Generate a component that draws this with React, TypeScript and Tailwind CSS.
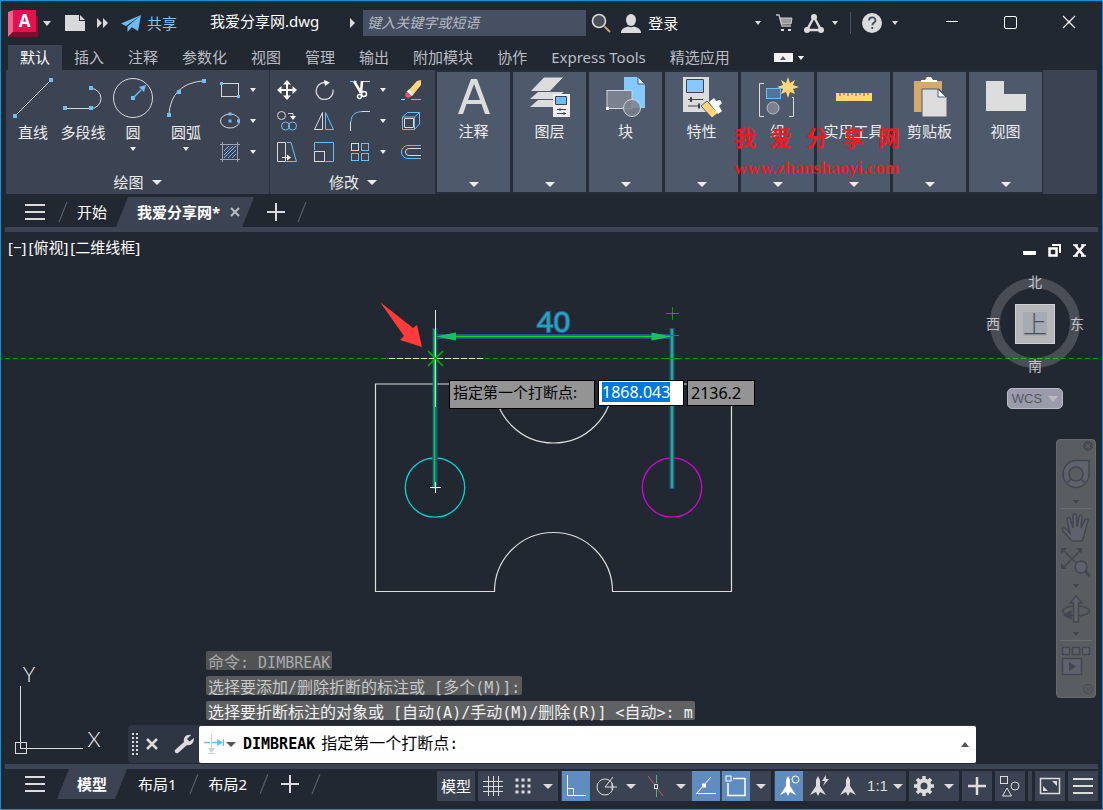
import type { ReactNode } from 'react';

interface IconProps {
  className?: string;
}

const ribbonTabs = [
  '默认',
  '插入',
  '注释',
  '参数化',
  '视图',
  '管理',
  '输出',
  '附加模块',
  '协作',
  'Express Tools',
  '精选应用',
];

function Caret({ className = 'w-2 h-1' }: IconProps) {
  return (
    <svg viewBox="0 0 8 4" className={className} preserveAspectRatio="none">
      <path d="M0 0h8L4 4z" fill="currentColor" />
    </svg>
  );
}

// Small light-blue grip square used all over the draw icons
function Grip({ x, y }: { x: number; y: number }) {
  return <rect x={x - 2} y={y - 2} width="4" height="4" fill="#6dbdf8" />;
}

/* ---------- Title bar ---------- */

function TitleBar() {
  return (
    <header className="flex h-11 items-center text-[#dcdcdc]">
      <button aria-label="应用程序菜单" className="ml-[3px] flex items-center gap-[5px]">
        <svg viewBox="0 0 30 27" className="h-[27px] w-[30px]">
          <path d="M0 2l6-2v21l-6 6z" fill="#f0668c" />
          <path d="M27 5l3 1v21H3l3-5h21z" fill="#8b0c32" />
          <path d="M0 27l6-6h21l2 6z" fill="#7c0f2e" />
          <rect x="5" y="0" width="23" height="22" fill="#e51050" />
          <text x="16.5" y="17" textAnchor="middle" fontSize="17" fontWeight="700" fontFamily="Open Sans, sans-serif" fill="#fff">
            A
          </text>
        </svg>
        <Caret className="h-[5px] w-2" />
      </button>
      <button aria-label="新建" className="ml-[14px]">
        <svg viewBox="0 0 20 16" className="h-4 w-5">
          <path d="M0 0h14v6h6v10H0z" fill="#d9d9d9" />
          <path d="M15 0l5 5h-5z" fill="#d9d9d9" />
        </svg>
      </button>
      <button aria-label="更多" className="ml-3">
        <svg viewBox="0 0 12 10" className="h-[10px] w-3">
          <path d="M0 0l5 5-5 5zM6 0l5 5-5 5z" fill="#d9d9d9" />
        </svg>
      </button>
      <button className="ml-3 flex items-center gap-[6px] text-[15px] leading-5 text-[#7cc4fa]">
        <svg viewBox="0 0 20 17" className="h-[17px] w-5">
          <path d="M20 0L0 8.500l5 2.500zM20 0L6.500 11.500V17l3.500-4zM20 0l-9.500 12 6.500 4z" fill="#6dbdf8" />
        </svg>
        共享
      </button>
      <h1 className="ml-[33px] pb-1 text-[15px] leading-5 text-white">我爱分享网.dwg</h1>
      <svg viewBox="0 0 5 10" className="ml-[31px] h-[10px] w-[5px]">
        <path d="M0 0l5 5-5 5z" fill="#dcdcdc" />
      </svg>
      <input
        aria-label="搜索"
        placeholder="键入关键字或短语"
        className="ml-2 h-[26px] w-[223px] bg-[#475062] px-1 pb-[2px] text-sm italic placeholder:text-[#b4bac4] focus:outline-none"
      />
      <button aria-label="查找" className="ml-[5px]">
        <svg viewBox="0 0 20 20" className="h-5 w-5" fill="none">
          <circle cx="8" cy="8" r="6.500" fill="#4a4f58" stroke="#d9d9d9" strokeWidth="1.600" />
          <path d="M13.500 13.500L19 19" stroke="#c9a26c" strokeWidth="2" />
        </svg>
      </button>
      <button className="ml-[10px] flex items-center gap-[7px] text-[15px] leading-5 text-white">
        <svg viewBox="0 0 20 19" className="h-[19px] w-5" fill="#dcdcdc">
          <ellipse cx="10" cy="6" rx="5" ry="6" />
          <path d="M0 19c0-4 3-5.500 7-6.500 2 1 4 1 6 0 4 1 7 2.500 7 6.500z" />
        </svg>
        登录
      </button>

      <div className="ml-auto flex items-center">
        <Caret className="h-1 w-[6px]" />
        <button aria-label="购物车" className="ml-[15px]">
          <svg viewBox="0 0 17 18" className="h-[18px] w-[17px]" fill="none">
            <path d="M0 1h3l3 11h9" stroke="#bdbdbd" strokeWidth="1.300" />
            <path d="M4 4h12l-1 6H5.500z" fill="#9a9a9a" stroke="#cfcfcf" />
            <path d="M5 15h3v2H5zM12 15h3v2h-3z" fill="#dcdcdc" />
          </svg>
        </button>
        <button aria-label="Autodesk App Store" className="ml-[11px] flex items-center gap-2">
          <svg viewBox="0 0 20 19" className="h-[19px] w-5" fill="none">
            <path d="M10 3L3 16h14z" stroke="#dcdcdc" strokeWidth="2.400" />
            <circle cx="10" cy="3" r="3" fill="#dcdcdc" />
            <circle cx="3" cy="16" r="3" fill="#dcdcdc" />
            <circle cx="17" cy="16" r="3" fill="#dcdcdc" />
          </svg>
          <Caret className="h-1 w-[6px]" />
        </button>
        <span className="ml-3 h-[22px] w-px bg-[#4a5365]" />
        <button aria-label="帮助" className="ml-[11px] flex items-center gap-[10px]">
          <svg viewBox="0 0 20 20" className="h-5 w-5">
            <circle cx="10" cy="10" r="10" fill="#dcdcdc" />
            <path d="M7 7.500c0-4 6.500-4 6.500-.3 0 2.600-3.200 2.600-3.200 5M10.300 14v2" fill="none" stroke="#444a54" strokeWidth="1.800" />
          </svg>
          <Caret className="h-1 w-[6px]" />
        </button>
        <button aria-label="最小化" className="ml-12 flex h-6 w-4 items-center pb-1">
          <span className="h-px w-3 bg-white" />
        </button>
        <button aria-label="最大化" className="mb-[2px] ml-[42px] h-[13px] w-[13px] rounded-[2px] border border-white" />
        <button aria-label="关闭" className="mr-[22px] mb-[2px] ml-[45px]">
          <svg viewBox="0 0 14 14" className="h-[14px] w-[14px]">
            <path d="M1 1l12 12M13 1L1 13" stroke="#fff" strokeWidth="1.200" />
          </svg>
        </button>
      </div>
    </header>
  );
}

function RibbonTabs() {
  return (
    <nav className="ml-[3px] flex h-[25px] items-center text-[15px] leading-[25px] whitespace-nowrap text-[#b9bdc4]">
      {ribbonTabs.map((tab, index) => (
        <button key={tab} className={index === 0 ? 'bg-[#3c4453] px-3 text-white' : 'px-3'}>
          {tab}
        </button>
      ))}
      <button aria-label="最小化功能区" className="ml-8 flex items-center gap-[5px] text-white">
        <span className="flex h-[9px] w-[19px] items-center justify-center bg-[#f2f2f2] text-[#555]">
          <Caret className="h-1 w-[6px] rotate-180" />
        </span>
        <Caret className="h-1 w-[6px]" />
      </button>
    </nav>
  );
}

/* ---------- Ribbon ---------- */

function LineIcon() {
  return (
    <svg viewBox="0 0 40 40" className="h-10 w-10">
      <path d="M2 38L38 2" stroke="#d9d9d9" />
      <Grip x={2} y={38} />
      <Grip x={38} y={2} />
    </svg>
  );
}

function PolylineIcon() {
  return (
    <svg viewBox="0 0 40 40" className="h-10 w-10" fill="none">
      <path d="M2 30.500h26a10 10 0 0 0 0-20" stroke="#d9d9d9" />
      <Grip x={2} y={30} />
      <Grip x={28} y={30} />
      <Grip x={28} y={10} />
    </svg>
  );
}

function CircleIcon() {
  return (
    <svg viewBox="0 0 40 40" className="h-10 w-10" fill="none">
      <circle cx="20" cy="20" r="19.500" stroke="#d9d9d9" />
      <path d="M20 20l8-8" stroke="#6dbdf8" strokeWidth="1.500" />
      <path d="M33 7l-2 7-5-5z" fill="#6dbdf8" />
      <Grip x={20} y={20} />
    </svg>
  );
}

function ArcIcon() {
  return (
    <svg viewBox="0 0 40 40" className="h-10 w-10" fill="none">
      <path d="M3 37C4 16 17 4 38 3" stroke="#d9d9d9" />
      <Grip x={3} y={37} />
      <Grip x={13} y={14} />
      <Grip x={38} y={3} />
    </svg>
  );
}

const drawTools = [
  { label: '直线', icon: <LineIcon />, menu: false },
  { label: '多段线', icon: <PolylineIcon />, menu: false },
  { label: '圆', icon: <CircleIcon />, menu: true },
  { label: '圆弧', icon: <ArcIcon />, menu: true },
];

const shapeTools = [
  {
    label: '矩形',
    icon: (
      <svg viewBox="0 0 20 20" className="h-5 w-5" fill="none">
        <rect x="1.500" y="3.500" width="17" height="13" stroke="#d9d9d9" />
        <rect x="0" y="2" width="3" height="3" fill="#6dbdf8" />
        <rect x="17" y="15" width="3" height="3" fill="#6dbdf8" />
      </svg>
    ),
  },
  {
    label: '椭圆',
    icon: (
      <svg viewBox="0 0 20 20" className="h-5 w-5" fill="none">
        <ellipse cx="10" cy="10" rx="9.500" ry="7" stroke="#d9d9d9" />
        <rect x="8.500" y="1.500" width="3" height="3" fill="#6dbdf8" />
        <rect x="8.500" y="8.500" width="3" height="3" fill="#6dbdf8" />
        <rect x="17" y="8.500" width="3" height="3" fill="#6dbdf8" />
      </svg>
    ),
  },
  {
    label: '图案填充',
    icon: (
      <svg viewBox="0 0 20 20" className="h-5 w-5" fill="none">
        <path d="M4 9l5-5M4 13l9-9M4 16L16 4M8 16l8-8M12 16l4-4" stroke="#6dbdf8" />
        <path d="M2.500 0v20M17.500 0v20M0 2.500h20M0 17.500h20" stroke="#9da3ad" />
      </svg>
    ),
  },
];

function DrawPanel() {
  return (
    <section className="flex w-[263px] flex-col">
      <div className="flex flex-1 pl-[2px]">
        {drawTools.map((tool) => (
          <button
            key={tool.label}
            className={
              tool.label === '圆弧'
                ? 'flex w-14 flex-col items-center pt-2'
                : 'flex w-[50px] flex-col items-center pt-2'
            }
          >
            {tool.icon}
            <span className="mt-1 text-[15px] leading-5 whitespace-nowrap">{tool.label}</span>
            {tool.menu && <Caret className="mt-[5px] h-1 w-[6px]" />}
          </button>
        ))}
        <div className="pt-1">
          {shapeTools.map((tool) => (
            <button key={tool.label} aria-label={tool.label} className="flex h-[31px] items-center">
              <span className="flex w-8 justify-center">{tool.icon}</span>
              <span className="flex w-[14px] justify-center">
                <Caret className="h-1 w-[6px]" />
              </span>
            </button>
          ))}
        </div>
      </div>
      <button className="mb-px flex h-[22px] items-center justify-center gap-2 text-[15px] leading-5">
        绘图
        <Caret className="h-[5px] w-[10px]" />
      </button>
    </section>
  );
}

function ModifyTool({ label, children }: { label: string; children: ReactNode }) {
  return (
    <button aria-label={label} className="flex h-[31px] items-center justify-center">
      <svg viewBox="0 0 20 20" className="h-5 w-5" fill="none" stroke="#d9d9d9">
        {children}
      </svg>
    </button>
  );
}

function ToolMenu() {
  return (
    <button aria-label="展开" className="flex h-[31px] items-center justify-center">
      <Caret className="h-1 w-[6px]" />
    </button>
  );
}

function ModifyPanel() {
  return (
    <section className="flex w-[164px] flex-col">
      <div className="grid flex-1 grid-cols-[32px_42px_30px_16px_40px] content-start pt-1">
        <ModifyTool label="移动">
          <path d="M10 3v14M3 10h14" strokeWidth="2" stroke="#fff" />
          <path d="M10 0l4 4.500H6zM10 20l4-4.500H6zM0 10l4.500-4v8zM20 10l-4.500-4v8z" fill="#fff" stroke="none" />
        </ModifyTool>
        <ModifyTool label="旋转">
          <path d="M11 2.500a8.500 8.500 0 1 0 8 7" strokeWidth="1.300" />
          <path d="M10 0l6 2.500-5 3.500z" fill="#fff" stroke="none" />
        </ModifyTool>
        <ModifyTool label="修剪">
          <path d="M0 1.500h8" stroke="#6dbdf8" strokeDasharray="3 1" />
          <path d="M12 1.500h8" />
          <path d="M4 1l7 12M12 1l-1 12" strokeWidth="2.500" stroke="#fff" />
          <circle cx="9.500" cy="16.500" r="2" strokeWidth="1.500" stroke="#fff" />
          <circle cx="14" cy="14" r="2.500" strokeWidth="1.500" stroke="#fff" />
        </ModifyTool>
        <ToolMenu />
        <ModifyTool label="删除">
          <path d="M16 1l4-1v5L11 16l-5-4z" fill="#ffd57a" stroke="none" />
          <path d="M8 9.500l4.500 4.500-2 2-5-4.500z" fill="#f1f1f1" stroke="none" />
          <path d="M6 12l4.500 4c-1.500 2-4 2.500-5.500 1s-1-3.500 1-5z" fill="#f0506a" stroke="none" />
          <path d="M0 19.500h4" />
          <path d="M10 19.500h10" stroke="#6dbdf8" />
        </ModifyTool>

        <ModifyTool label="复制">
          <circle cx="4.500" cy="4.500" r="4" />
          <circle cx="8.500" cy="15" r="4" stroke="#6dbdf8" />
          <circle cx="15.500" cy="15" r="4" stroke="#6dbdf8" />
          <path d="M11 2.500h5V6" />
          <path d="M13 5h6l-3 4z" fill="#fff" stroke="none" />
        </ModifyTool>
        <ModifyTool label="镜像">
          <path d="M8.500 1.500v17h-8z" />
          <path d="M11.500 1.500v17h8z" stroke="#6dbdf8" />
        </ModifyTool>
        <ModifyTool label="圆角">
          <path d="M1 11C1 4 5 1 12 .5" stroke="#6dbdf8" />
          <path d="M12 .5h8M.5 11v9" />
        </ModifyTool>
        <ToolMenu />
        <ModifyTool label="分解">
          <path d="M3.500 7.500h9v9h-9z" />
          <path d="M1.500 6l5-4.500h12V13l-5 5.500h-12zM1.500 6h12l5-4.500M13.500 6v12" stroke="#6dbdf8" />
        </ModifyTool>

        <ModifyTool label="拉伸">
          <path d="M.5.500h8v19h-8z" />
          <path d="M10 .5h4l5.500 19H9" stroke="#6dbdf8" />
          <path d="M5 15.500h6" stroke="#fff" />
          <path d="M10 12.500l4 3-4 3z" fill="#fff" stroke="none" />
        </ModifyTool>
        <ModifyTool label="缩放">
          <path d="M.5 8V.5h19v19h-8" stroke="#6dbdf8" />
          <rect x=".5" y="9.500" width="10" height="10" />
        </ModifyTool>
        <ModifyTool label="阵列">
          <rect x="1.500" y="1.500" width="7" height="7" />
          <rect x="11.500" y="1.500" width="7" height="7" stroke="#6dbdf8" />
          <rect x="1.500" y="11.500" width="7" height="7" stroke="#6dbdf8" />
          <rect x="11.500" y="11.500" width="7" height="7" stroke="#6dbdf8" />
        </ModifyTool>
        <ToolMenu />
        <ModifyTool label="偏移">
          <path d="M20 3.500H7a6.500 6.500 0 0 0 0 13h13" stroke="#6dbdf8" />
          <path d="M20 6.500H8a3.500 3.500 0 0 0 0 7h12" />
        </ModifyTool>
      </div>
      <button className="mb-px flex h-[22px] items-center justify-center gap-2 text-[15px] leading-5">
        修改
        <Caret className="h-[5px] w-[10px]" />
      </button>
    </section>
  );
}

const collapsedPanels = [
  {
    label: '注释',
    icon: (
      <path d="M4 37L17 2h6l13 35h-5l-3.500-10h-15L9 37zM14 23h12L20 7z" fill="#dcdcdc" />
    ),
  },
  {
    label: '图层',
    icon: (
      <>
        <path d="M0 30l8-7h20l-4 7zM0 22l8-7h26l-10 7z" fill="#dcdcdc" />
        <path d="M0 14.500L14 0h20L20 14.500z" fill="#dcdcdc" stroke="#4e5a6c" />
        <path d="M23 17h17v23H23z" fill="#efefef" />
        <path d="M25.500 19.500h11v8h-11z" fill="#6dbdf8" stroke="#3c4453" />
        <path d="M27 32.500h9M27 36.500h9M30 31v3M34 35v3" stroke="#3c4453" />
      </>
    ),
  },
  {
    label: '块',
    icon: (
      <>
        <path d="M18 0h14l7 7v24H18z" fill="#84caff" />
        <path d="M32 0v7h7z" fill="#dff1ff" stroke="#4e5a6c" />
        <rect x="1" y="13.500" width="25" height="18" fill="#7a828f" stroke="#cfd2d6" />
        <circle cx="26" cy="31" r="8.500" fill="#7a828f" fillOpacity=".85" stroke="#cfd2d6" />
        <rect x="0" y="30" width="3" height="3" fill="#f2f2f2" />
      </>
    ),
  },
  {
    label: '特性',
    icon: (
      <>
        <path d="M1 0h26v35H1z" fill="#dcdcdc" />
        <path d="M4.500 2.500h17v13h-17z" fill="#84caff" stroke="#3c4453" />
        <path d="M6 22.500h15M6 29h12" stroke="#3c4453" />
        <path d="M9 20v5M17 26.500v5" stroke="#3c4453" strokeWidth="2" />
        <path d="M19 29l6-5 11 12-6 5z" fill="#ffd57a" stroke="#4e5a6c" />
        <path d="M27 25l5-4 2 3 4-1 2 3-3 3 3 5-4 3z" fill="#fff" />
      </>
    ),
  },
  {
    label: '组',
    icon: (
      <>
        <path d="M6 6.500H1.500v33H6M34 20.500h1.500v19H31" fill="none" stroke="#dcdcdc" />
        <rect x="8.500" y="11.500" width="14" height="10" fill="#52759c" stroke="#6dbdf8" />
        <circle cx="15" cy="31" r="6" fill="#7a828f" stroke="#b9bdc4" />
        <path d="M30 0l2 6 5-3-2 5 6 2-6 2 2 5-5-2-2 6-2-6-5 2 2-5-6-2 6-2-2-5 5 3z" fill="#ffd57a" />
      </>
    ),
  },
  {
    label: '实用工具',
    icon: (
      <>
        <path d="M2 16h36v8H2z" fill="#ffd57a" />
        <path d="M6 16v3M10 16v2M14 16v3M18 16v2M22 16v3M26 16v2M30 16v3M34 16v2" stroke="#6b5c3a" />
      </>
    ),
  },
  {
    label: '剪贴板',
    icon: (
      <>
        <path d="M4 4h28v31H4z" fill="#d5a86c" />
        <path d="M12 12h17l8 8v20H12z" fill="#dcdcdc" stroke="#4e5a6c" />
        <path d="M28 12v8h8z" fill="#fff" stroke="#4e5a6c" />
        <path d="M11 5V3h4l2-3h4l2 3h4v2z" fill="#fff" />
      </>
    ),
  },
  {
    label: '视图',
    icon: <path d="M0 4h18v13h22v17H0z" fill="#dcdcdc" />,
  },
];

function Ribbon() {
  return (
    <div className="relative mr-px ml-px flex h-[124px] bg-[#3c4453] text-[#ececec]">
      <DrawPanel />
      <span className="w-[2px] border-l border-[#272e39]" />
      <ModifyPanel />
      <div className="flex gap-[3px] bg-[#272e39] py-[2px] pr-px pl-[2px]">
        {collapsedPanels.map((panel) => (
          <button key={panel.label} className="flex w-[73px] flex-col items-center bg-[#4e5a6c] pt-[5px] pb-[5px]">
            <svg viewBox="0 0 40 40" className="h-10 w-10 overflow-visible">
              {panel.icon}
            </svg>
            <span className="mt-1 text-[15px] leading-5 whitespace-nowrap">{panel.label}</span>
            <Caret className="mt-auto h-[5px] w-[10px]" />
          </button>
        ))}
      </div>

      {/* Site watermark */}
      <div className="pointer-events-none absolute top-[54px] left-[728px] font-bold text-[#e81c24]">
        <div className="flex gap-[14px] text-[22px] leading-[26px]">
          {['我', '爱', '分', '享', '网'].map((char) => (
            <span key={char}>{char}</span>
          ))}
        </div>
        <p className="mt-[6px] font-['Liberation_Serif',serif] text-lg leading-6">www.zhanshaoyi.com</p>
      </div>
    </div>
  );
}

/* ---------- Tabs ---------- */

function Slash() {
  return (
    <svg viewBox="0 0 10 20" className="h-5 w-[10px]">
      <path d="M1 20L9 0" stroke="#555e6d" strokeWidth="1.200" />
    </svg>
  );
}

function MenuIcon({ className = 'h-4 w-5' }: IconProps) {
  return (
    <svg viewBox="0 0 20 16" className={className}>
      <path d="M0 1h20M0 8h20M0 15h20" stroke="#dcdcdc" strokeWidth="2" />
    </svg>
  );
}

function PlusIcon() {
  return (
    <svg viewBox="0 0 18 18" className="h-[18px] w-[18px]">
      <path d="M9 0v18M0 9h18" stroke="#dcdcdc" strokeWidth="2" />
    </svg>
  );
}

function FileTabs() {
  return (
    <nav className="flex h-[33px] items-center pt-[3px] text-[15px] leading-[30px] text-white">
      <button aria-label="文件菜单" className="ml-5">
        <MenuIcon />
      </button>
      <span className="ml-[13px]">
        <Slash />
      </span>
      <button className="ml-[9px]">开始</button>
      <div className="ml-[9px] flex items-center bg-[#3c4453] pr-[14px] pl-[21px] [clip-path:polygon(12px_0,100%_0,calc(100%-12px)_100%,0_100%)]">
        <button className="font-bold">我爱分享网*</button>
        <button aria-label="关闭文件" className="ml-[10px]">
          <svg viewBox="0 0 10 10" className="h-[10px] w-[10px]">
            <path d="M1 1l8 8M9 1L1 9" stroke="#b9bdc4" strokeWidth="2" />
          </svg>
        </button>
      </div>
      <button aria-label="新图形" className="ml-[13px]">
        <PlusIcon />
      </button>
      <span className="ml-3">
        <Slash />
      </span>
    </nav>
  );
}

/* ---------- Drawing area ---------- */

function Drawing() {
  return (
    <svg className="absolute inset-0 h-full w-full" fill="none">
      {/* Plate outline with the two half-round notches */}
      <path
        d="M370.500 152H489.500A59 59 0 0 0 607.500 152H726.500V359.500H607.500A59 59 0 0 0 489.500 359.500H370.500Z"
        stroke="#dcdcdc"
        strokeWidth="1.200"
      />
      <circle cx="430" cy="255.500" r="29.700" stroke="#00d5d5" strokeWidth="1.300" />
      <circle cx="667" cy="255.500" r="29.700" stroke="#d800d8" strokeWidth="1.300" />

      {/* Highlighted dimension */}
      <path d="M430 96V257M667 96V257M430 104.500H667" stroke="#264f8c" strokeWidth="5" />
      <path d="M667 97V256" stroke="#1dae84" strokeWidth="2.500" />
      <path d="M450 104.500H647" stroke="#00d820" strokeWidth="1.500" />
      <path d="M430.500 104.500l20.500-4v8zM667 104.500l-20.500-4v8z" fill="#14c464" />
      <text
        x="548.500"
        y="100"
        textAnchor="middle"
        fontFamily="Liberation Sans, sans-serif"
        fontSize="30"
        stroke="#28609c"
        strokeWidth="2"
        fill="#27a5b4"
        className="[paint-order:stroke]"
      >
        40
      </text>

      {/* Crosshair and tracking line */}
      <path d="M430.500 78V175" stroke="#e6e6e6" />
      <path d="M429.500 97V256" stroke="#00e01c" strokeWidth="1.500" />
      <line x1="0" y1="126.500" x2="100%" y2="126.500" stroke="#0a9a12" strokeDasharray="5 3" />
      <path d="M382 126.500H479" stroke="#e6e6e6" />
      <path d="M382 126.500H479" stroke="#0a9a12" strokeDasharray="2 6" />
      <path d="M423 119l15 15M438 119l-15 15" stroke="#00b400" strokeWidth="1.500" />
      <path d="M661 81.500h13M667.500 75v13M661 103.500h13M661 126.500h13" stroke="#0a9a12" />
      <path d="M425 255.500h11M430.500 250v11" stroke="#fff" />

      <path d="M375 70L408 96L412 93L417 115L395 108L399 104Z" fill="#ff3b3b" />
    </svg>
  );
}

function UcsIcon() {
  return (
    <svg viewBox="0 0 96 96" className="absolute bottom-2 left-2 h-24 w-24" fill="none">
      <path d="M7.500 26v62M7 88.500h63" stroke="#dcdcdc" />
      <rect x="2.500" y="82.500" width="11" height="11" stroke="#dcdcdc" />
      <g fontFamily="Lato, sans-serif" fontSize="21" fontWeight="300" fill="#f2f2f2" textAnchor="middle">
        <text x="16" y="22">Y</text>
        <text x="81" y="87">X</text>
      </g>
    </svg>
  );
}

function DynamicInput() {
  return (
    <form className="absolute top-[148px] left-[444px] flex items-start gap-[3px] text-black">
      <label htmlFor="first-x" className="h-[29px] w-[146px] border border-black bg-[#949494] pl-[3px] text-[15px] leading-[22px]">
        指定第一个打断点:
      </label>
      <span className="h-[26px] w-[86px] border border-black bg-white pt-px pl-[3px]">
        <input id="first-x" defaultValue="1868.043" className="block h-5 w-[68px] bg-[#0078d7] leading-5 text-white" />
      </span>
      <input
        aria-label="Y"
        defaultValue="2136.2"
        className="h-[26px] w-[68px] border border-black bg-[#949494] pb-px pl-[3px] leading-6"
      />
    </form>
  );
}

function ViewCube() {
  return (
    <div className="relative grid grid-cols-[20px_64px_20px] grid-rows-[20px_64px_20px] place-items-center text-sm leading-5 text-[#c3c5c8]">
      {/* Translucent so that the tracking line stays visible through the ring */}
      <svg viewBox="0 0 104 104" className="absolute inset-0" fill="none">
        <circle cx="52" cy="51" r="40" stroke="#fff" strokeOpacity=".18" strokeWidth="10" />
      </svg>
      <span className="relative col-start-2">北</span>
      <span className="relative col-start-1">西</span>
      <button className="relative flex h-10 w-10 items-center justify-center border border-[#cfd0d2] bg-[#b4b6b8] text-[#4a4e55]">
        <span className="flex h-6 w-6 items-center justify-center bg-[#a5abb3] text-2xl leading-6 font-light">上</span>
      </button>
      <span className="relative">东</span>
      <span className="relative col-start-2">南</span>
    </div>
  );
}

function NavButton({ label, className, children }: { label: string; className: string; children: ReactNode }) {
  return (
    <button aria-label={label} className={className}>
      <svg viewBox="0 0 30 30" className="h-[30px] w-[30px]" fill="none" stroke="#43474f" strokeWidth="1.500">
        {children}
      </svg>
    </button>
  );
}

function NavigationBar() {
  return (
    <div className="mt-[30px] flex w-10 flex-col items-center rounded border border-[#66696c] bg-[#5a5d60] text-[#3f434a]">
      <button aria-label="关闭导航栏" className="mr-[2px] flex h-3 items-center self-end">
        <svg viewBox="0 0 10 10" className="h-[10px] w-[10px]">
          <circle cx="5" cy="5" r="5" fill="#484b50" />
          <path d="M3 3l4 4M7 3L3 7" stroke="#66696c" />
        </svg>
      </button>
      <NavButton label="全导航控制盘" className="flex h-11 items-center">
        <path d="M15 1.500h13V15a13 13.500 0 1 1-13-13.500z" fill="#5d626c" />
        <circle cx="15" cy="15" r="7" fill="#5a5d60" />
        <path d="M10 20l-4 4M20 20l4 4" />
      </NavButton>
      <Caret className="my-1 h-1 w-[6px] shrink-0" />
      <NavButton label="平移" className="flex h-[38px] w-8 items-center justify-center border-t border-[#6b6e71]">
        <path
          d="M11 28L2 18c-2-3 1-4 3-2l4 4L6 7c0-3 3-3 3.500 0l2.500 8V3c0-3 3-3 3.500 0l.5 11 2-10c1-3 3.500-2 3 .5L20 15l4-8c1.500-2 4-1 3 1.500-3 7-2 11-6 19.500z"
          fill="#5d626c"
        />
      </NavButton>
      <NavButton label="范围缩放" className="flex h-[34px] items-center">
        <path d="M2 2l18 18M20 2L2 20" />
        <path d="M0 0h6L0 6zM21 0h-6l6 6zM0 21h6l-6-6z" fill="#43474f" stroke="none" />
        <circle cx="20" cy="19" r="6" fill="#5d626c" />
        <path d="M24 23l5 5" strokeWidth="3" />
      </NavButton>
      <Caret className="my-1 h-1 w-[6px] shrink-0" />
      <NavButton label="动态观察" className="flex h-9 items-center">
        <ellipse cx="15" cy="16" rx="13.500" ry="5" />
        <path d="M12.500 27V8H9l6-7 6 7h-3.500v19z" fill="#5d626c" />
        <path d="M3 20l7-4v8z" fill="#43474f" />
      </NavButton>
      <Caret className="my-1 h-1 w-[6px] shrink-0" />
      <NavButton label="ShowMotion" className="flex h-10 w-8 items-center justify-center border-t border-[#6b6e71]">
        <path d="M1.500 1.500h7v7h-7zM11.500 1.500h7v7h-7zM21.500 1.500h7v7h-7zM1.500 12.500h19v16h-19z" fill="#5d626c" />
        <path d="M8 16l7 4.500-7 4.500z" fill="#43474f" stroke="none" />
      </NavButton>
      <button aria-label="导航栏选项" className="mr-[2px] flex h-[17px] items-center self-end">
        <svg viewBox="0 0 10 10" className="h-[10px] w-[10px]">
          <circle cx="5" cy="5" r="4.500" fill="none" stroke="#484b50" />
          <path d="M2.500 4h5M3 6h4" stroke="#484b50" />
        </svg>
      </button>
    </div>
  );
}

// Command text: Latin runs are set one size below the Chinese glyphs
function CommandText({ text }: { text: string }) {
  return (
    <>
      {text.split(/([ -~]+)/).map((run, index) => (
        <span key={index} className={index % 2 === 1 ? 'text-[15px] whitespace-pre' : 'text-base'}>
          {run}
        </span>
      ))}
    </>
  );
}

function CommandWindow() {
  return (
    <section className="absolute right-[122px] bottom-px left-[123px] font-['DejaVu_Sans_Mono','Noto_Sans_CJK_SC',monospace]">
      <div className="mb-[5px] flex flex-col items-start gap-[6px] pl-[78px] leading-[17px] whitespace-nowrap">
        <p className="h-[19px] rounded-[2px] bg-[#505254] px-[2px] text-[#a8aaac]">
          <CommandText text="命令: DIMBREAK" />
        </p>
        <p className="h-[19px] rounded-[2px] bg-[#595b5c] px-[2px] text-[#c6c8ca]">
          <CommandText text="选择要添加/删除折断的标注或 [多个(M)]:" />
        </p>
        <p className="h-[19px] rounded-[2px] bg-[#606162] px-[2px] text-[#f0f0f0]">
          <CommandText text="选择要折断标注的对象或 [自动(A)/手动(M)/删除(R)] <自动>: m" />
        </p>
      </div>
      <div className="flex h-[38px] items-center rounded-l bg-[#2f3643]">
        <svg viewBox="0 0 6 22" className="ml-1 h-[22px] w-[6px]">
          <path d="M1 0v22M5 0v22" stroke="#dcdcdc" strokeWidth="2" strokeDasharray="2 2" />
        </svg>
        <button aria-label="关闭命令行" className="ml-2">
          <svg viewBox="0 0 12 12" className="h-3 w-3">
            <path d="M1 1l10 10M11 1L1 11" stroke="#dcdcdc" strokeWidth="2.500" />
          </svg>
        </button>
        <button aria-label="自定义" className="ml-4">
          <svg viewBox="0 0 20 20" className="h-5 w-5">
            <path d="M1 16L10 8c-1-4 2-8 7-7l-4 4 2.500 2.500L20 4c0 5-3 8-7 7l-9 8c-2 1-4-1-3-3z" fill="#dcdcdc" />
          </svg>
        </button>
        <div className="ml-[5px] flex h-[37px] flex-1 items-center rounded-[2px] bg-white text-black">
          <button aria-label="最近使用的命令" className="ml-[5px] flex items-center gap-[2px] text-[#555]">
            <svg viewBox="0 0 20 20" className="h-5 w-5" fill="none">
              <path d="M0 8.500h6M8 8.500h6M19.500 5v7" stroke="#6dbdf8" strokeWidth="1.500" />
              <path d="M13 5l6 3.500-6 3.500z" fill="#6dbdf8" />
              <path d="M7.500 0v16M4 19.500h7" stroke="#cfcfcf" />
              <path d="M4 14h7l-3.500 5z" fill="#cfcfcf" />
            </svg>
            <Caret className="h-[5px] w-[10px]" />
          </button>
          <label htmlFor="command" className="ml-[7px] whitespace-nowrap">
            <b className="mr-[6px] text-[15px]">DIMBREAK</b>
            <CommandText text="指定第一个打断点:" />
          </label>
          <input id="command" className="h-full min-w-0 flex-1 px-2 focus:outline-none" />
          <button aria-label="命令历史" className="mr-[7px] text-[#555]">
            <Caret className="h-[5px] w-2 rotate-180" />
          </button>
        </div>
      </div>
    </section>
  );
}

function Viewport() {
  return (
    <main className="relative min-h-[540px] flex-1 overflow-hidden border-y-[5px] border-[#3d4554]">
      <Drawing />
      <UcsIcon />
      <div className="relative flex h-9 items-center justify-between pr-3 pl-[3px] text-white">
        <div className="flex gap-[2px] pb-[6px] text-[15px] leading-5">
          <button>[−]</button>
          <button>[俯视]</button>
          <button>[二维线框]</button>
        </div>
        <div className="flex items-center gap-3">
          <button aria-label="最小化视口" className="flex h-[14px] w-[13px] items-end pb-[2px]">
            <span className="h-1 w-[13px] bg-white" />
          </button>
          <button aria-label="还原视口">
            <svg viewBox="0 0 13 13" className="h-[13px] w-[13px]" fill="none" stroke="#fff">
              <path d="M4 1h8v8" strokeWidth="2" />
              <rect x="1.500" y="4.500" width="7" height="7" strokeWidth="2.500" />
            </svg>
          </button>
          <button aria-label="关闭视口">
            <svg viewBox="0 0 13 13" className="h-[13px] w-[13px]">
              <path d="M2 1l9 11M11 1L2 12" stroke="#fff" strokeWidth="2.500" />
              <path d="M0 1h5M8 1h5M0 12h5M8 12h5" stroke="#fff" strokeWidth="1.500" />
            </svg>
          </button>
        </div>
      </div>
      <aside className="absolute top-10 right-[2px] flex flex-col items-end">
        <div className="mr-[9px] flex flex-col items-center">
          <ViewCube />
          <button className="mt-3 flex h-[21px] w-14 items-center justify-center gap-[6px] rounded-[5px] border border-[#b9bbc4] bg-[#9a9cab] font-['Liberation_Sans',sans-serif] text-[13px] text-[#54575f]">
            WCS
            <Caret className="h-[6px] w-[10px] text-[#b9bbc4]" />
          </button>
        </div>
        <NavigationBar />
      </aside>
      <DynamicInput />
      <CommandWindow />
    </main>
  );
}

/* ---------- Status bar ---------- */

function StatusButton({ label, active, children }: { label: string; active?: boolean; children: ReactNode }) {
  return (
    <button
      aria-label={label}
      className={
        active
          ? 'mx-px flex h-[30px] w-7 items-center justify-center bg-[#5f8dc0]'
          : 'flex h-[30px] w-[30px] items-center justify-center'
      }
    >
      <svg viewBox="0 0 22 22" className="h-[22px] w-[22px]" fill="none" stroke="#dcdcdc">
        {children}
      </svg>
    </button>
  );
}

function StatusMenu() {
  return (
    <button aria-label="展开" className="flex w-5 items-center justify-center">
      <Caret className="h-[5px] w-[10px]" />
    </button>
  );
}

const scaleFigure = 'M10 1l2 4v6l6 9-6-3-2 4-2-4-6 3 6-9V5z';

function StatusBar() {
  return (
    <footer className="flex h-10 items-start text-[15px] whitespace-nowrap text-white">
      <div className="flex h-[30px] items-center leading-[30px]">
        <button aria-label="布局菜单" className="ml-5">
          <MenuIcon />
        </button>
        <button className="ml-3 bg-[#3c4453] px-5 font-bold [clip-path:polygon(12px_0,100%_0,calc(100%-12px)_100%,0_100%)]">
          模型
        </button>
        <button className="ml-[11px]">布局1</button>
        <span className="ml-3">
          <Slash />
        </span>
        <button className="ml-[10px]">布局2</button>
        <span className="ml-3">
          <Slash />
        </span>
        <button aria-label="新建布局" className="ml-3">
          <PlusIcon />
        </button>
        <span className="ml-3">
          <Slash />
        </span>
      </div>

      <div className="mt-[2px] ml-auto flex h-[30px] gap-[3px] text-[#dcdcdc] *:bg-[#3b4352]">
        <button className="w-[38px] leading-[30px] text-white">模型</button>
        <div className="flex">
          <StatusButton label="栅格">
            <path d="M6.500 1v20M11.500 1v20M16.500 1v20M1 6.500h20M1 11.500h20M1 16.500h20" />
          </StatusButton>
          <StatusButton label="捕捉">
            <path d="M3.500 5h16M3.500 11h16M3.500 17h16" strokeWidth="3" strokeDasharray="3 3" />
          </StatusButton>
          <StatusMenu />
        </div>
        <div className="flex">
          <StatusButton label="正交" active>
            <path d="M2.500 0v20.500H21M2.500 13.500h6v7" stroke="#fff" />
          </StatusButton>
          <StatusButton label="极轴追踪">
            <circle cx="10" cy="12" r="8" />
            <path d="M10 12L18 2M10 12h12" />
            <path d="M17 8v7" />
          </StatusButton>
          <StatusMenu />
          <StatusButton label="等轴测草图">
            <path d="M3 1l6 8M12 13l6 8" stroke="#c85a64" />
            <path d="M11.500 0v8M11.500 14v8" stroke="#4fb46c" />
            <rect x="9.500" y="9.500" width="3" height="4" />
          </StatusButton>
          <StatusMenu />
          <StatusButton label="对象捕捉追踪" active>
            <path d="M1 18.500h20M2 18L16 2" stroke="#fff" />
            <rect x="7" y="8.500" width="4" height="4" fill="#fff" stroke="none" />
          </StatusButton>
          <StatusButton label="对象捕捉" active>
            <path d="M8 3.500h12v17H3V8" stroke="#fff" strokeWidth="1.500" />
            <rect x="1" y="1" width="5" height="5" stroke="#fff" />
          </StatusButton>
          <StatusMenu />
        </div>
        <div className="flex">
          <StatusButton label="注释可见性" active>
            <path d={scaleFigure} fill="#fff" stroke="none" />
            <circle cx="17.500" cy="4.500" r="3.500" stroke="#fff" />
          </StatusButton>
          <StatusButton label="自动缩放">
            <path d={scaleFigure} fill="#dcdcdc" stroke="none" />
            <path d="M18 0l-4 6h3l-2 5 6-7h-3z" fill="#dcdcdc" stroke="none" />
          </StatusButton>
          <StatusButton label="注释比例">
            <path d={scaleFigure} fill="#dcdcdc" stroke="none" />
          </StatusButton>
          <button className="flex w-[42px] items-center justify-center gap-[5px] font-['Liberation_Sans',sans-serif]">
            1:1
            <Caret className="h-[5px] w-[10px]" />
          </button>
        </div>
        <div className="flex">
          <StatusButton label="切换工作空间">
            <circle cx="11" cy="11" r="5.500" strokeWidth="4" />
            <path
              d="M11 1v4M11 17v4M1 11h4M17 11h4M4 4l3 3M15 15l3 3M18 4l-3 3M7 15l-3 3"
              strokeWidth="3.500"
            />
          </StatusButton>
          <StatusMenu />
        </div>
        <StatusButton label="注释监视器">
          <path d="M11 2v18M2 11h18" strokeWidth="2.500" />
        </StatusButton>
        <StatusButton label="隔离对象">
          <rect x="1.500" y="1.500" width="7" height="7" />
          <circle cx="16" cy="11" r="4" />
          <path d="M8 13l4.500 8h-9z" />
        </StatusButton>
        <span className="w-1" />
        <StatusButton label="全屏显示">
          <rect x="1.500" y="3.500" width="19" height="15" strokeWidth="1.500" />
          <path d="M18 6v5l-5-5zM4 16v-5l5 5z" fill="#dcdcdc" stroke="none" />
        </StatusButton>
        <button aria-label="自定义" className="flex w-[30px] items-center justify-center">
          <MenuIcon className="h-[18px] w-5" />
        </button>
      </div>
    </footer>
  );
}

export default function App() {
  return (
    <div className="flex min-h-screen flex-col border border-[#0696d7] bg-[#222831] px-1 font-['Noto_Sans','Noto_Sans_CJK_SC',sans-serif] text-base">
      <TitleBar />
      <RibbonTabs />
      <Ribbon />
      <FileTabs />
      <Viewport />
      <StatusBar />
    </div>
  );
}
